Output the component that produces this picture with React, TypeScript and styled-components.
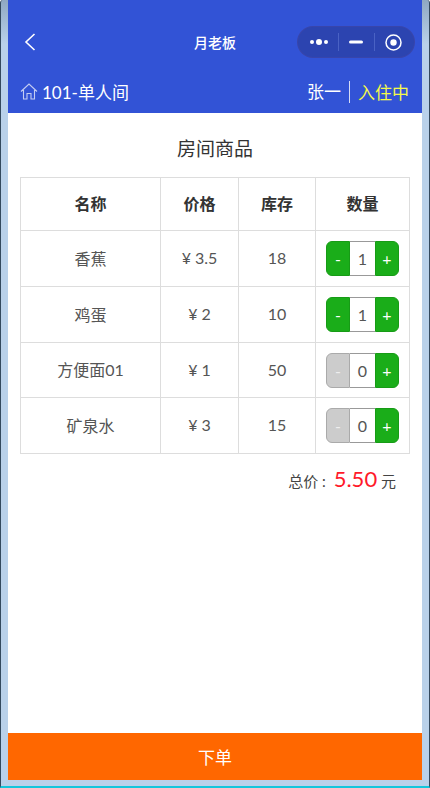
import * as React from 'react';
import styled, { createGlobalStyle } from 'styled-components';

type Item = {
  name: string;
  price: string;
  stock: number;
  count: number;
};

const items: Item[] = [
  { name: '香蕉', price: '¥ 3.5', stock: 18, count: 1 },
  { name: '鸡蛋', price: '¥ 2', stock: 10, count: 1 },
  { name: '方便面01', price: '¥ 1', stock: 50, count: 0 },
  { name: '矿泉水', price: '¥ 3', stock: 15, count: 0 },
];

const rowHeights = [56, 56, 55, 56];

const Stepper: React.FC<{ count: number }> = ({ count }) => {
  const empty = count === 0;
  return (
    <StepperWrap>
      <StepButton $disabled={empty} $side='left'>-</StepButton>
      <StepValue>{count}</StepValue>
      <StepButton $side='right'>+</StepButton>
    </StepperWrap>
  );
};

const App: React.FC = () => {
  return (
    <>
      <GlobalStyle />
      <Frame>
        <Screen>
          <Header>
            <NavBar>
              <BackButton>
                <svg width='14' height='20' viewBox='0 0 14 20' fill='none'>
                  <path d='M11.5 2 L3 10 L11.5 18' stroke='#fff' strokeWidth='1.6' />
                </svg>
              </BackButton>
              <NavTitle>月老板</NavTitle>
              <Capsule>
                <CapsuleCell>
                  <svg width='18' height='8' viewBox='0 0 18 8'>
                    <circle cx='2' cy='4' r='2' fill='#fff' />
                    <circle cx='9' cy='4' r='3' fill='#fff' />
                    <circle cx='16' cy='4' r='2' fill='#fff' />
                  </svg>
                </CapsuleCell>
                <CapsuleDivider />
                <CapsuleCell>
                  <svg width='15' height='4' viewBox='0 0 15 4'>
                    <rect width='14' height='3' y='0.5' rx='1.5' fill='#fff' />
                  </svg>
                </CapsuleCell>
                <CapsuleDivider />
                <CapsuleCell>
                  <svg width='17' height='17' viewBox='0 0 17 17' fill='none'>
                    <circle cx='8.5' cy='8.5' r='7.5' stroke='#fff' strokeWidth='1.5' />
                    <circle cx='8.5' cy='8.5' r='3.2' fill='#fff' />
                  </svg>
                </CapsuleCell>
              </Capsule>
            </NavBar>
            <RoomBar>
              <RoomName>
                <svg width='18' height='17' viewBox='0 0 18 17' fill='none'>
                  <path
                    d='M1 8.5 L9 1 L17 8.5 M3.5 7 V16 H7 V10.5 H11 V16 H14.5 V7'
                    stroke='#c4cdf2'
                    strokeWidth='1.1'
                  />
                </svg>
                101-单人间
              </RoomName>
              <RoomGuest>
                <GuestName>张一</GuestName>
                <RoomStatus>入住中</RoomStatus>
              </RoomGuest>
            </RoomBar>
          </Header>

          <Content>
            <SectionTitle>房间商品</SectionTitle>
            <GoodsTable>
              <colgroup>
                <col style={{ width: 140 }} />
                <col style={{ width: 78 }} />
                <col style={{ width: 77 }} />
                <col style={{ width: 94 }} />
              </colgroup>
              <thead>
                <tr>
                  <HeadCell>名称</HeadCell>
                  <HeadCell>价格</HeadCell>
                  <HeadCell>库存</HeadCell>
                  <HeadCell>数量</HeadCell>
                </tr>
              </thead>
              <tbody>
                {items.map((item, i) => (
                  <tr key={item.name} style={{ height: rowHeights[i] }}>
                    <BodyCell>{item.name}</BodyCell>
                    <BodyCell>{item.price}</BodyCell>
                    <BodyCell>{item.stock}</BodyCell>
                    <StepperCell>
                      <Stepper count={item.count} />
                    </StepperCell>
                  </tr>
                ))}
              </tbody>
            </GoodsTable>
            <TotalRow>
              总价 : <TotalPrice>5.50</TotalPrice> 元
            </TotalRow>
          </Content>

          <OrderButton>下单</OrderButton>
        </Screen>
      </Frame>
    </>
  );
};

const GlobalStyle = createGlobalStyle`
  html, body {
    margin: 0;
    padding: 0;
    height: 100%;
    overflow: hidden;
  }
  body {
    font-family: Lato, "Noto Sans CJK SC", sans-serif;
  }
`;

const Frame = styled.div`
  box-sizing: border-box;
  width: 430px;
  height: 788px;
  padding: 0 7px 6px;
  border-left: 1px solid #33495e;
  border-right: 1px solid #33495e;
  border-bottom: 2px solid #12c6dc;
  border-top-left-radius: 3px;
  border-top-right-radius: 3px;
  background: linear-gradient(180deg, #8fa8c2 0, #b9d1ea 44px);
`;

const Screen = styled.div`
  display: flex;
  flex-direction: column;
  height: 780px;
  background: #fff;
`;

const Header = styled.header`
  background: #3253d6;
  color: #fff;
`;

const NavBar = styled.div`
  display: flex;
  align-items: center;
  justify-content: space-between;
  height: 70px;
  padding: 14px 7px 0 15px;
  box-sizing: border-box;
`;

const BackButton = styled.div`
  display: flex;
  width: 60px;
`;

const NavTitle = styled.div`
  font-size: 14px;
  font-weight: 500;
  margin-left: 50px;
`;

const Capsule = styled.div`
  display: flex;
  align-items: center;
  box-sizing: border-box;
  width: 118px;
  height: 32px;
  padding: 0 0 0 12px;
  border: 1px solid rgba(60, 70, 170, 0.8);
  border-radius: 16px;
  background: #2c44b0;
`;

const CapsuleCell = styled.div`
  display: flex;
  align-items: center;
  justify-content: center;
`;

const CapsuleDivider = styled.div`
  width: 1px;
  height: 18px;
  margin: 0 10px;
  background: #4a62c4;
`;

const RoomBar = styled.div`
  display: flex;
  align-items: center;
  justify-content: space-between;
  height: 43px;
  padding: 0 13px 0 12px;
`;

const RoomName = styled.div`
  display: flex;
  align-items: center;
  gap: 4px;
  font-size: 17px;
`;

const RoomGuest = styled.div`
  display: flex;
  align-items: center;
  font-size: 17px;
`;

const GuestName = styled.span`
  padding-right: 8px;
  border-right: 1px solid #d6dcf5;
  line-height: 22px;
`;

const RoomStatus = styled.span`
  padding-left: 8px;
  color: #f4f94a;
`;

const Content = styled.main`
  flex: 1;
  padding: 0 12px;
`;

const SectionTitle = styled.h2`
  margin: 0;
  height: 64px;
  line-height: 72px;
  font-size: 19px;
  font-weight: 400;
  text-align: center;
  color: #333;
`;

const GoodsTable = styled.table`
  width: 390px;
  table-layout: fixed;
  border-collapse: collapse;
  color: #333;
  font-size: 16px;
`;

const HeadCell = styled.th`
  height: 50px;
  padding: 0 0 2px;
  border: 1px solid #ddd;
  font-size: 16px;
  font-weight: 700;
  text-align: center;
`;

const BodyCell = styled.td`
  padding: 0 0 2px;
  border: 1px solid #ddd;
  text-align: center;
  color: #555;
`;

const StepperCell = styled(BodyCell)`
  padding: 0;
`;

const StepperWrap = styled.div`
  display: inline-flex;
  vertical-align: middle;
  box-sizing: border-box;
  width: 73px;
  height: 35px;
`;

const StepButton = styled.div<{ $disabled?: boolean; $side: 'left' | 'right' }>`
  box-sizing: border-box;
  width: 24px;
  line-height: 33px;
  color: ${({ $disabled }) => ($disabled ? '#eee' : '#fff')};
  background: ${({ $disabled }) => ($disabled ? '#ccc' : '#1aad19')};
  border: 1px solid ${({ $disabled }) => ($disabled ? '#aaa' : '#179b16')};
  border-radius: ${({ $side }) => ($side === 'left' ? '6px 0 0 6px' : '0 6px 6px 0')};
  font-size: 16px;
`;

const StepValue = styled.div`
  box-sizing: border-box;
  flex: 1;
  line-height: 33px;
  border-top: 1px solid #999;
  border-bottom: 1px solid #999;
  color: #555;
  font-size: 16px;
`;

const TotalRow = styled.div`
  padding: 11px 14px 0 0;
  text-align: right;
  font-size: 15px;
  color: #444;
`;

const TotalPrice = styled.span`
  margin-left: 4px;
  font-size: 22px;
  color: #ff1a2a;
`;

const OrderButton = styled.div`
  height: 47px;
  line-height: 50px;
  text-align: center;
  font-size: 17px;
  color: #fff;
  background: #ff6700;
`;

export default App;
